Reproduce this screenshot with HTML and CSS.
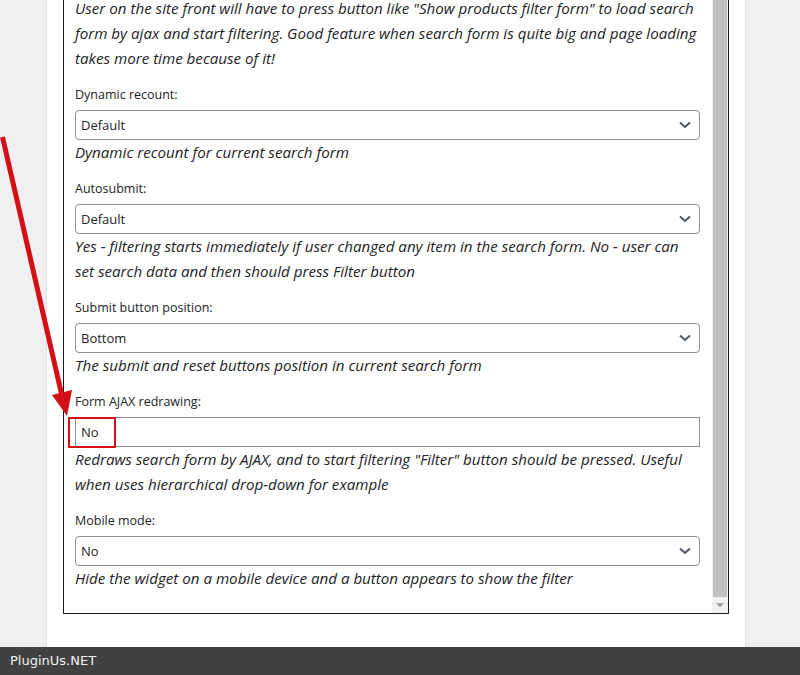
FILE: index.html
```html
<!DOCTYPE html>
<html lang="en">
<head>
<meta charset="utf-8">
<title>Form options</title>
<link rel="stylesheet" href="styles.css">
</head>
<body>
<div class="page">
  <div class="main">
    <div class="panel">
      <div class="box">
        <div class="content">
          <p class="desc">User on the site front will have to press button like "Show products filter form" to load search form by ajax and start filtering. Good feature when search form is quite big and page loading takes more time because of it!</p>

          <div class="field">
            <div class="label">Dynamic recount:</div>
            <div class="select"><span>Default</span><svg class="chev" viewBox="0 0 12 8" width="12" height="8"><path d="M1 1.5 L6 6 L11 1.5" /></svg></div>
            <p class="desc">Dynamic recount for current search form</p>
          </div>

          <div class="field">
            <div class="label">Autosubmit:</div>
            <div class="select"><span>Default</span><svg class="chev" viewBox="0 0 12 8" width="12" height="8"><path d="M1 1.5 L6 6 L11 1.5" /></svg></div>
            <p class="desc">Yes - filtering starts immediately if user changed any item in the search form. No - user can set search data and then should press Filter button</p>
          </div>

          <div class="field">
            <div class="label">Submit button position:</div>
            <div class="select"><span>Bottom</span><svg class="chev" viewBox="0 0 12 8" width="12" height="8"><path d="M1 1.5 L6 6 L11 1.5" /></svg></div>
            <p class="desc">The submit and reset buttons position in current search form</p>
          </div>

          <div class="field">
            <div class="label">Form AJAX redrawing:</div>
            <div class="select plain"><span>No</span><div class="highlight"></div></div>
            <p class="desc">Redraws search form by AJAX, and to start filtering "Filter" button should be pressed. Useful when uses hierarchical drop-down for example</p>
          </div>

          <div class="field">
            <div class="label">Mobile mode:</div>
            <div class="select"><span>No</span><svg class="chev" viewBox="0 0 12 8" width="12" height="8"><path d="M1 1.5 L6 6 L11 1.5" /></svg></div>
            <p class="desc">Hide the widget on a mobile device and a button appears to show the filter</p>
          </div>
        </div>
        <div class="scrollbar">
          <div class="thumb"></div>
          <div class="sb-btn"><svg viewBox="0 0 8 5" width="8" height="5"><path d="M0 0 H8 L4 4.5 Z" /></svg></div>
        </div>
      </div>
    </div>
  </div>
  <div class="footer">PluginUs.NET</div>
</div>
<svg class="arrow" width="120" height="440" viewBox="0 0 120 440">
  <line x1="2.5" y1="137" x2="62" y2="396" />
  <polygon points="67,416 52,395 72,390" />
</svg>
</body>
</html>
```

FILE: styles.css
```css
* { box-sizing: border-box; }

html, body {
  margin: 0;
  padding: 0;
}

body {
  background: #f0f0f0;
  font-family: "Open Sans", "Noto Sans", sans-serif;
  color: #1d2327;
  position: relative;
  width: 800px;
  height: 675px;
  overflow: hidden;
}

.page {
  display: flex;
  flex-direction: column;
  height: 675px;
}

.main {
  flex: 1;
  display: flex;
  min-height: 0;
}

.panel {
  margin-left: 46px;
  width: 700px;
  background: #fff;
  border-left: 1px solid #e2e2e2;
  border-right: 1px solid #e2e2e2;
  padding: 0 16px 33px 16px;
  display: flex;
  flex-direction: column;
}

.box {
  flex: 1;
  display: flex;
  border: 1px solid #1a1a1a;
  border-top: none;
  min-height: 0;
  overflow: hidden;
}

.content {
  flex: 1;
  padding: 0 12px 0 11px;
  margin-top: -4px;
  overflow: hidden;
}

.desc {
  margin: 0 0 14px 0;
  font-style: italic;
  font-size: 15.15px;
  line-height: 25px;
  color: #1d2327;
}

.label {
  font-size: 12.5px;
  line-height: 20px;
  margin-bottom: 5px;
  color: #1d2327;
}

.select {
  position: relative;
  height: 30px;
  border: 1px solid #8c8f94;
  border-radius: 4px;
  display: flex;
  align-items: center;
  justify-content: space-between;
  padding: 0 8px 0 5px;
  font-size: 13px;
  color: #1d2327;
  background: #fff;
}

.select.plain {
  border-radius: 0;
}

.chev {
  fill: none;
  stroke: #50575e;
  stroke-width: 2;
}

.highlight {
  position: absolute;
  left: -8px;
  top: -1px;
  width: 48px;
  height: 31px;
  border: 2px solid #d40f16;
}

.scrollbar {
  width: 16px;
  background: #f1f1f1;
  display: flex;
  flex-direction: column;
}

.thumb {
  flex: 1;
  margin: 0 1px;
  background: #c1c1c1;
}

.sb-btn {
  height: 16px;
  display: flex;
  align-items: center;
  justify-content: center;
}

.sb-btn svg {
  fill: #a3a3a3;
}

.footer {
  height: 28px;
  background: #414141;
  color: #f2f2f2;
  font-family: "DejaVu Sans", sans-serif;
  font-size: 13px;
  line-height: 28px;
  padding-left: 10px;
}

.arrow {
  position: absolute;
  left: 0;
  top: 0;
  pointer-events: none;
}

.arrow line {
  stroke: #d40f16;
  stroke-width: 5;
}

.arrow polygon {
  fill: #d40f16;
}
```
